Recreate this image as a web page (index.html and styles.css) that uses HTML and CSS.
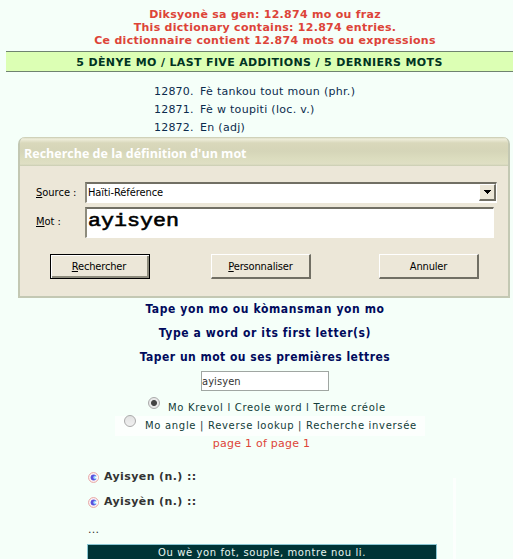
FILE: index.html
```html
<!DOCTYPE html>
<html lang="fr">
<head>
<meta charset="utf-8">
<title>Haïti-Référence</title>
<link rel="stylesheet" href="styles.css">
</head>
<body>
<header class="counts">
  <div class="count">Diksyonè sa gen: 12.874 mo ou fraz</div>
  <div class="count">This dictionary contains: 12.874 entries.</div>
  <div class="count">Ce dictionnaire contient 12.874 mots ou expressions</div>
</header>
<h2 class="band">5 DÈNYE MO / LAST FIVE ADDITIONS / 5 DERNIERS MOTS</h2>
<div class="additions">
  <div class="row"><span class="num">12870.</span><span class="term">Fè tankou tout moun (phr.)</span></div>
  <div class="row"><span class="num">12871.</span><span class="term">Fè w toupiti (loc. v.)</span></div>
  <div class="row"><span class="num">12872.</span><span class="term">En (adj)</span></div>
</div>
<section class="dialog">
  <div class="titlebar">Recherche de la définition d'un mot</div>
  <div class="fields">
    <label class="label"><u>S</u>ource :</label>
    <div class="combo"><span>Haïti-Référence</span><span class="drop"><svg width="7" height="4" viewBox="0 0 7 4" shape-rendering="crispEdges"><path d="M0 0H7V1H6V2H5V3H4V4H3V3H2V2H1V1H0Z"/></svg></span></div>
    <label class="label"><u>M</u>ot :</label>
    <div class="word"><span>ayisyen</span></div>
  </div>
  <div class="buttons">
    <div class="btn default"><span><u>R</u>echercher</span></div>
    <div class="btn"><span><u>P</u>ersonnaliser</span></div>
    <div class="btn"><span>Annuler</span></div>
  </div>
</section>
<section class="search">
  <div class="prompt">Tape yon mo ou kòmansman yon mo</div>
  <div class="prompt">Type a word or its first letter(s)</div>
  <div class="prompt last">Taper un mot ou ses premières lettres</div>
  <div class="query">ayisyen</div>
  <div class="option first"><span class="radio on"></span><span class="opt">Mo Krevol l Creole word l Terme créole</span></div>
  <div class="option second"><span class="radio"></span><span class="opt">Mo angle | Reverse lookup | Recherche inversée</span></div>
  <div class="page">page 1 of page 1</div>
</section>
<section class="results">
  <div class="list">
    <div class="entry"><svg class="bullet" width="11" height="11" viewBox="0 0 11 11"><circle cx="5.5" cy="5.5" r="4.9" fill="#fff8f8" stroke="#e5a1a1"/><circle cx="5.6" cy="5.5" r="3" fill="#5a50dc"/><circle cx="7.3" cy="5.5" r="2" fill="#8fd0ff"/><path d="M6.4 5.5L10 3.6V7.4Z" fill="#fff8f8"/></svg><span>Ayisyen (n.) ::</span></div>
    <div class="entry"><svg class="bullet" width="11" height="11" viewBox="0 0 11 11"><circle cx="5.5" cy="5.5" r="4.9" fill="#fff8f8" stroke="#e5a1a1"/><circle cx="5.6" cy="5.5" r="3" fill="#5a50dc"/><circle cx="7.3" cy="5.5" r="2" fill="#8fd0ff"/><path d="M6.4 5.5L10 3.6V7.4Z" fill="#fff8f8"/></svg><span>Ayisyèn (n.) ::</span></div>
    <div class="dots">...</div>
    <div class="notice">Ou wè yon fot, souple, montre nou li.</div>
  </div>
  <div class="edge"></div>
</section>
</body>
</html>
```
FILE: styles.css
```css
* { box-sizing: border-box; }
body {
  margin: 0;
  width: 513px;
  height: 559px;
  overflow: hidden;
  background: #f5fff9;
  font: 11px/13px "DejaVu Sans", Verdana, sans-serif;
  white-space: nowrap;
}
.counts { padding: 8px 0 0 17px; height: 51px; text-align: center; }
.count { color: #dd4438; font-weight: bold; letter-spacing: .28px; }
.band {
  margin: 0 0 0 6px;
  height: 21px;
  border: solid #6f8370;
  border-width: 1px 0;
  background: #dcffb4;
  color: #003322;
  font-size: 11px;
  line-height: 21px;
  text-align: center;
  letter-spacing: .35px;
}
.additions { height: 65px; padding: 11px 0 0 154px; color: #0b2b4d; line-height: 18px; }
.row { display: flex; }
.num { width: 46px; letter-spacing: .2px; }
.term { letter-spacing: .3px; }
.dialog {
  width: 492px;
  height: 161px;
  margin-left: 18px;
  border: 2px solid #c3c8b3;
  border-top: 0;
  border-radius: 7px 7px 0 0;
  background: #ece7d8;
  font-family: "DejaVu Sans Condensed", Tahoma, sans-serif;
  font-stretch: condensed;
  overflow: hidden;
}
.titlebar {
  height: 29px;
  padding-left: 4px;
  background: linear-gradient(#c6c8ae 0, #efeedb 2px, #d9d8bb 6px, #d5d5b8 14px, #dcddbf 22px, #dfdfc4 27px, #c9ccb2 29px);
  color: #fff;
  font: bold 12.5px/33px "Open Sans", "Noto Sans", sans-serif;
}
.fields {
  display: grid;
  grid-template-columns: 49px 412px;
  grid-template-rows: 21px 31px;
  row-gap: 4px;
  padding: 16px 0 0 16px;
}
.label { line-height: 21px; }
.label u, .btn u { text-underline-offset: 1px; text-decoration-thickness: 1px; text-decoration-skip-ink: none; }
.label:nth-of-type(2) { line-height: 30px; }
.combo, .word {
  border: 1px solid #fff;
  border-top: 2px solid #716f64;
  border-left: 2px solid #8d8b7c;
  background: #fff;
}
.combo { display: flex; justify-content: space-between; padding-left: 1px; line-height: 18px; letter-spacing: -.08px; }
.drop {
  display: flex;
  align-items: center;
  justify-content: center;
  width: 17px;
  height: 17px;
  border: 1px solid #fff;
  border-right: 2px solid #716f64;
  border-bottom: 2px solid #716f64;
  background: #ece7d8;
}
.word {
  width: 409px;
  padding-left: 1px;
  font: 19px/24px "Liberation Mono", monospace;
  -webkit-text-stroke: .6px #000;
}
.word span { display: inline-block; transform: scaleX(1.14); transform-origin: left; }
.buttons { display: flex; padding: 16px 0 0 30px; }
.btn {
  width: 100px;
  height: 25px;
  border: 1px solid #fff;
  border-right: 2px solid #716f64;
  border-bottom: 2px solid #716f64;
  text-align: center;
  line-height: 23px;
  letter-spacing: -.15px;
}
.btn.default { border: 1px solid #000; padding-right: 2px; box-shadow: inset 1px 1px #fff, inset -2px -2px #8d8b7c; }
.btn:nth-child(2) { margin-left: 61px; }
.btn:nth-child(3) { margin-left: 68px; }
.search { padding-left: 17px; text-align: center; }
.prompt {
  height: 24px;
  color: #000a5c;
  font: bold 12px/22px "DejaVu Sans Condensed", Tahoma, sans-serif;
  font-stretch: condensed;
  letter-spacing: .6px;
}
.prompt.last { letter-spacing: .48px; }
.query {
  width: 128px;
  height: 20px;
  margin: 1px 0 0 184px;
  padding-left: 0;
  border: 1px solid #a0a6a2;
  background: #fff;
  color: #333;
  font: 11px/19px "DejaVu Sans Condensed", Tahoma, sans-serif;
  text-align: left;
  letter-spacing: .1px;
}
.option { display: flex; color: #123c38; font-size: 10px; letter-spacing: .69px; }
.first { height: 25px; padding: 6px 0 0 131px; }
.second { width: 310px; height: 20px; margin-left: 98px; padding-left: 9px; background: #fcfffd; }
.radio {
  width: 12px;
  height: 12px;
  margin-right: 8px;
  border: 1px solid #aaa;
  border-radius: 50%;
  background: linear-gradient(#e2e2e2, #f0f0f0);
}
.second .radio { margin: -1px 9px 0 0; }
.radio.on { background: radial-gradient(circle, #444 0 2.5px, #e9e9e9 3.5px); }
.first .opt { margin-top: 4px; }
.second .opt { margin-top: 3px; }
.page { margin-top: 1px; padding-right: 7px; color: #dd4438; letter-spacing: .25px; }
.results { display: flex; height: 116px; padding-left: 87px; color: #333; }
.list { padding-top: 20px; }
.entry { display: flex; height: 25px; font-weight: bold; letter-spacing: .4px; }
.bullet { margin: 2px 5px 0 1px; }
.dots { height: 24px; padding: 3px 0 0 1px; letter-spacing: .3px; }
.notice {
  width: 350px;
  height: 20px;
  border: solid #8ac6d2;
  border-width: 1px 1px 0;
  background: #003436;
  color: #e8f5f0;
  font-size: 10px;
  text-align: center;
  line-height: 16px;
  letter-spacing: .6px;
}
.edge { width: 3px; margin: 28px 0 0 16px; background: #fcfffd; }
```
